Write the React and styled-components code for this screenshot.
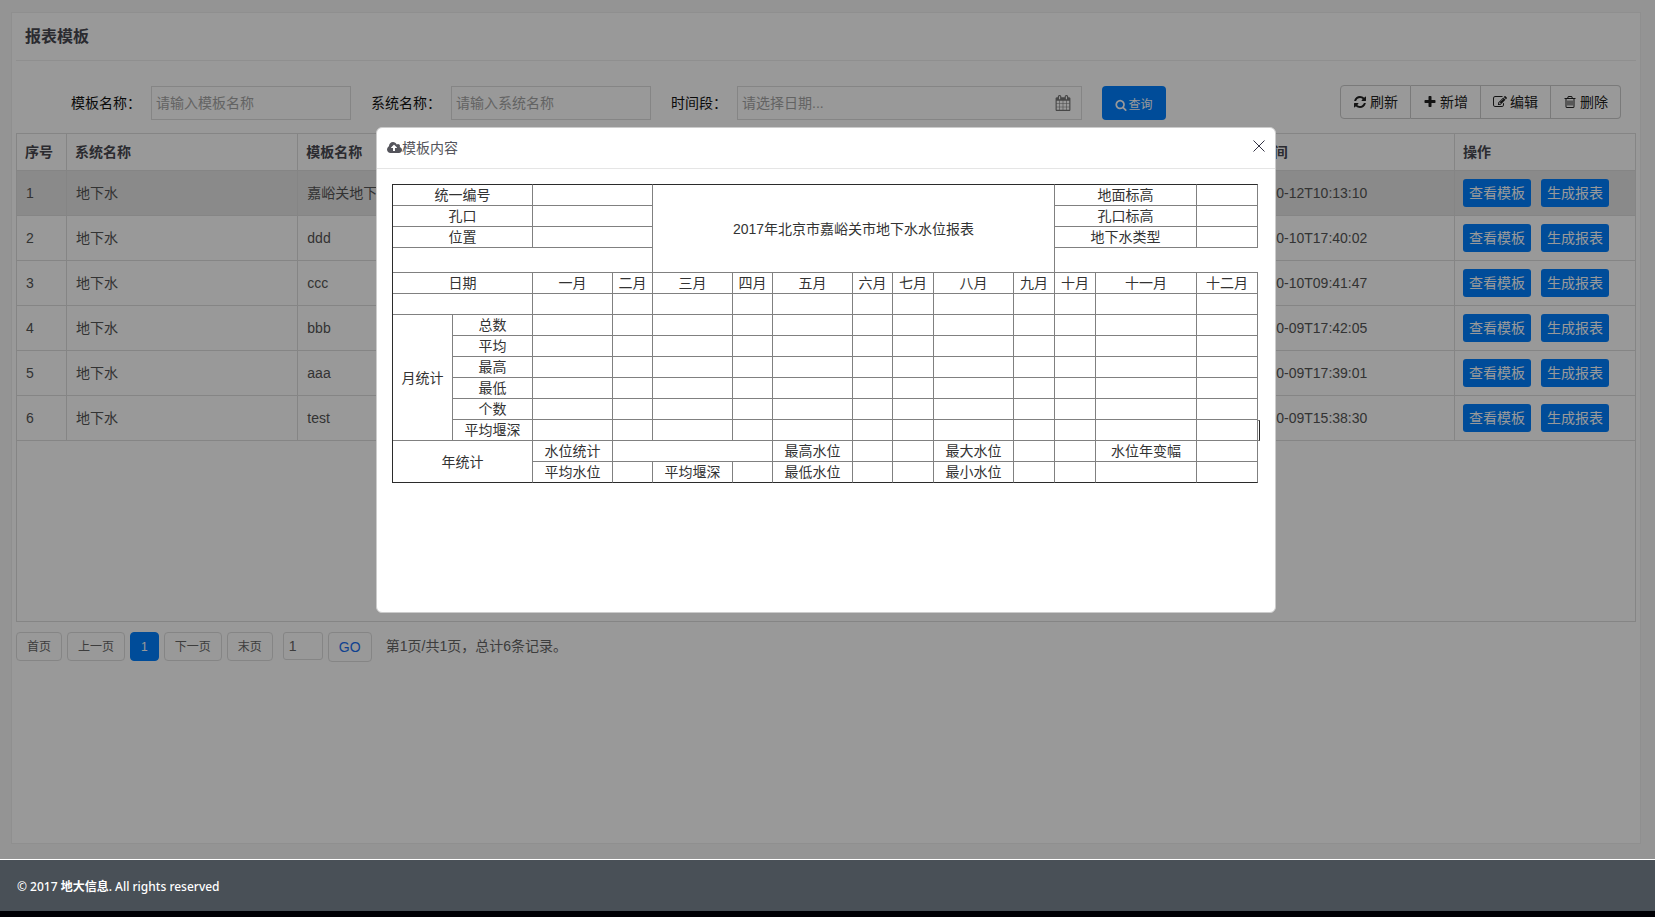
import React from "react";
import styled, { createGlobalStyle } from "styled-components";

const BLUE = "#007fff";
const LINE = "#dedede";

const GlobalStyle = createGlobalStyle`
  *, *::before, *::after { box-sizing: border-box; }
  body {
    margin: 0;
    background: #f7f7f7;
    color: #333;
    font: 14px/20px "Liberation Sans", "Noto Sans CJK SC", sans-serif;
  }
  button, input { font: inherit; color: inherit; margin: 0; }
  button { cursor: pointer; padding: 0; }
`;

/* ---------- icons ---------- */

const ICONS = {
  search: [1792, "M1216 832q0-185-131.5-316.5t-316.5-131.5-316.5 131.5-131.5 316.5 131.5 316.5 316.5 131.5 316.5-131.5 131.5-316.5zm512 832q0 52-38 90t-90 38q-54 0-90-38l-343-342q-179 124-399 124-143 0-273.5-55.5t-225-150-150-225-55.5-273.5 55.5-273.5 150-225 225-150 273.5-55.5 273.5 55.5 225 150 150 225 55.5 273.5q0 220-124 399l343 343q37 37 37 90z"],
  refresh: [1792, "M1639 1056q0 5-1 7-64 268-268 434.5t-478 166.5q-146 0-282.5-55t-243.5-157l-129 129q-19 19-45 19t-45-19-19-45v-448q0-26 19-45t45-19h448q26 0 45 19t19 45-19 45l-137 137q71 66 161 102t187 36q134 0 250-65t186-179q11-17 53-117 8-23 30-23h192q13 0 22.5 9.5t9.5 22.5zm25-800v448q0 26-19 45t-45 19h-448q-26 0-45-19t-19-45 19-45l138-138q-148-137-349-137-134 0-250 65t-186 179q-11 17-53 117-8 23-30 23h-199q-13 0-22.5-9.5t-9.5-22.5v-7q65-268 270-434.5t480-166.5q146 0 284 55.5t245 156.5l130-129q19-19 45-19t45 19 19 45z"],
  plus: [1792, "M1600 736v192q0 40-28 68t-68 28h-416v416q0 40-28 68t-68 28h-192q-40 0-68-28t-28-68v-416h-416q-40 0-68-28t-28-68v-192q0-40 28-68t68-28h416v-416q0-40 28-68t68-28h192q40 0 68 28t28 68v416h416q40 0 68 28t28 68z"],
  edit: [1792, "M888 1184l116-116-152-152-116 116v56h96v96h56zm440-720q-16-16-33 1l-350 350q-17 17-1 33t33-1l350-350q17-17 1-33zm80 594v190q0 119-84.5 203.5t-203.5 84.5h-832q-119 0-203.5-84.5t-84.5-203.5v-832q0-119 84.5-203.5t203.5-84.5h832q63 0 117 25 15 7 18 23 3 17-9 29l-49 49q-14 14-32 8-23-6-45-6h-832q-66 0-113 47t-47 113v832q0 66 47 113t113 47h832q66 0 113-47t47-113v-126q0-13 9-22l64-64q15-15 35-7t20 29zm-96-738l288 288-672 672h-288v-288zm444 132l-92 92-288-288 92-92q28-28 68-28t68 28l152 152q28 28 28 68t-28 68z"],
  trash: [1792, "M704 736v576q0 14-9 23t-23 9h-64q-14 0-23-9t-9-23v-576q0-14 9-23t23-9h64q14 0 23 9t9 23zm256 0v576q0 14-9 23t-23 9h-64q-14 0-23-9t-9-23v-576q0-14 9-23t23-9h64q14 0 23 9t9 23zm256 0v576q0 14-9 23t-23 9h-64q-14 0-23-9t-9-23v-576q0-14 9-23t23-9h64q14 0 23 9t9 23zm128 724v-948h-896v948q0 22 7 40.5t14.5 27 10.5 8.5h832q3 0 10.5-8.5t14.5-27 7-40.5zm-672-1076h448l-48-117q-7-9-17-11h-317q-10 2-17 11zm928 32v64q0 14-9 23t-23 9h-96v948q0 83-47 143.5t-113 60.5h-832q-66 0-113-58.5t-47-141.5v-952h-96q-14 0-23-9t-9-23v-64q0-14 9-23t23-9h309l70-167q15-37 54-63t79-26h320q40 0 79 26t54 63l70 167h309q14 0 23 9t9 23z"],
  calendar: [1792, "M192 1664h288v-288h-288v288zm352 0h320v-288h-320v288zm-352-352h288v-320h-288v320zm352 0h320v-320h-320v320zm-352-384h288v-288h-288v288zm736 736h320v-288h-320v288zm-384-736h320v-288h-320v288zm768 736h288v-288h-288v288zm-384-352h320v-320h-320v320zm-352-864v-288q0-13-9.5-22.5t-22.5-9.5h-64q-13 0-22.5 9.5t-9.5 22.5v288q0 13 9.5 22.5t22.5 9.5h64q13 0 22.5-9.5t9.5-22.5zm736 864h288v-320h-288v320zm-384-384h320v-288h-320v288zm384 0h288v-288h-288v288zm32-480v-288q0-13-9.5-22.5t-22.5-9.5h-64q-13 0-22.5 9.5t-9.5 22.5v288q0 13 9.5 22.5t22.5 9.5h64q13 0 22.5-9.5t9.5-22.5zm384-64v1280q0 52-38 90t-90 38h-1408q-52 0-90-38t-38-90v-1280q0-52 38-90t90-38h128v-96q0-66 47-113t113-47h64q66 0 113 47t47 113v96h384v-96q0-66 47-113t113-47h64q66 0 113 47t47 113v96h128q52 0 90 38t38 90z"],
  upload: [1920, "M1280 864q0-14-9-23l-352-352q-9-9-23-9t-23 9l-351 351q-10 12-10 24 0 14 9 23t23 9h224v352q0 13 9.5 22.5t22.5 9.5h192q13 0 22.5-9.5t9.5-22.5v-352h224q13 0 22.5-9.5t9.5-22.5zm640 288q0 159-112.5 271.5t-271.5 112.5h-1088q-185 0-316.5-131.5t-131.5-316.5q0-130 70-240t188-165q-2-30-2-43 0-212 150-362t362-150q156 0 285.5 87t188.5 231q71-62 166-62 106 0 181 75t75 181q0 76-41 138 130 31 213.5 135.5t83.5 238.5z"],
};

const IconSvg = styled.svg`
  height: ${(p) => p.$size}px;
  flex: none;
  fill: currentColor;
`;

const Icon = ({ name, size = 14 }) => (
  <IconSvg $size={size} viewBox={`0 0 ${ICONS[name][0]} 1792`} aria-hidden="true">
    <path d={ICONS[name][1]} />
  </IconSvg>
);

/* ---------- page frame ---------- */

const Page = styled.div`
  min-height: 100vh;
  display: flex;
  flex-direction: column;
`;

const Main = styled.main`
  flex: 1;
  display: flex;
  padding: 12px 14px 15px 11px;
`;

const Panel = styled.section`
  flex: 1;
  min-width: 0;
  padding: 0 4px;
  background: #fff;
  border: 1px solid #eee;
`;

const PanelTitle = styled.h1`
  margin: 0;
  padding: 12px 9px 11px;
  border-bottom: 1px solid #eee;
  font-size: 16px;
  line-height: 24px;
  font-weight: 700;
  color: #484850;
`;

const Footer = styled.footer`
  position: relative;
  z-index: 2;
  padding: 17px 17px 15px;
  border-top: 1px solid #fff;
  border-bottom: 6px solid #000005;
  background: #495057;
  color: #fff;
  font: 500 12px/19px "Noto Sans", "Noto Sans CJK SC", sans-serif;
`;

/* ---------- search bar ---------- */

const Toolbar = styled.div`
  display: flex;
  justify-content: space-between;
  padding: 24px 15px 13px 55px;
`;

const SearchForm = styled.form`
  display: flex;
  gap: 20px;
  padding-top: 1px;
`;

const Field = styled.div`
  display: flex;
  align-items: center;
  gap: 10px;
  color: #111;
`;

const InputBox = styled.div`
  display: flex;
  align-items: center;
  width: ${(p) => p.$width}px;
  height: 34px;
  padding-right: 10px;
  border: 1px solid ${LINE};
  color: #777;
`;

const TextInput = styled.input`
  flex: 1;
  min-width: 0;
  height: 32px;
  padding: 0 4px;
  border: 0;
  outline: 0;
  background: none;
  &::placeholder { color: #a6a6a6; opacity: 1; }
`;

const SearchButton = styled.button`
  display: flex;
  align-items: center;
  justify-content: center;
  gap: 1px;
  width: 64px;
  height: 34px;
  padding-top: 4px;
  border: 0;
  border-radius: 4px;
  background: ${BLUE};
  color: #fff;
  font-size: 12px;
`;

const ButtonGroup = styled.div`
  display: flex;
`;

const GroupButton = styled.button`
  display: flex;
  align-items: center;
  justify-content: center;
  gap: 3px;
  height: 34px;
  padding: 0 12px;
  border: 1px solid #ccc;
  border-left-width: ${(p) => (p.$first ? 1 : 0)}px;
  border-radius: ${(p) => (p.$first ? "4px 0 0 4px" : p.$last ? "0 4px 4px 0" : 0)};
  background: #fff;
  color: #222;
`;

/* ---------- list ---------- */

const ListBox = styled.div`
  min-height: 489px;
  border: 1px solid ${LINE};
`;

const List = styled.table`
  width: 100%;
  table-layout: fixed;
  border-collapse: separate;
  border-spacing: 0;
`;

const HeadCell = styled.th`
  width: ${(p) => (p.$width ? `${p.$width}px` : "auto")};
  height: 37px;
  padding: 0 8px;
  border-bottom: 1px solid ${LINE};
  text-align: left;
  font-weight: 700;
  color: #484850;
  & + & { border-left: 1px solid ${LINE}; }
`;

const Row = styled.tr`
  background: ${(p) => (p.$selected ? "#e6e6e6" : "#fff")};
`;

const Cell = styled.td`
  height: 45px;
  padding: 0 ${(p) => (p.$actions ? 8 : 9)}px;
  border-bottom: 1px solid ${LINE};
  color: #555;
  & + & { border-left: 1px solid ${LINE}; }
`;

const Actions = styled.div`
  display: flex;
  gap: 10px;
`;

const ActionButton = styled.button`
  width: 68px;
  height: 28px;
  border: 0;
  border-radius: 3px;
  background: ${BLUE};
  color: #fff;
`;

/* ---------- pager ---------- */

const Pager = styled.form`
  display: flex;
  align-items: flex-start;
  gap: 5px;
  padding-top: 10px;
  color: #666;
`;

const PageButton = styled.button`
  height: 29px;
  padding: 0 10px;
  border: 1px solid ${(p) => (p.$active ? BLUE : LINE)};
  border-radius: 4px;
  background: ${(p) => (p.$active ? BLUE : "#fff")};
  color: ${(p) => (p.$active ? "#fff" : "#666")};
  font-size: 12px;
`;

const PageInput = styled.input`
  width: 40px;
  height: 28px;
  margin-left: 5px;
  padding: 0 5px;
  border: 1px solid ${LINE};
  border-radius: 3px;
  background: #fff;
`;

const GoButton = styled.button`
  width: 44px;
  height: 30px;
  border: 1px solid ${LINE};
  border-radius: 4px;
  background: #fff;
  color: #1a6ef0;
`;

const PageInfo = styled.span`
  padding-left: 9px;
  line-height: 28px;
`;

/* ---------- dialog ---------- */

const Overlay = styled.div`
  position: fixed;
  inset: 0;
  z-index: 1;
  display: flex;
  align-items: flex-start;
  justify-content: center;
  padding: 127px 3px 0 0;
  background: rgba(0, 0, 0, 0.4);
`;

const Dialog = styled.div`
  width: 900px;
  max-width: 100%;
  min-height: 486px;
  background: #fff;
  border: 1px solid #ccc;
  border-radius: 6px;
`;

const DialogHeader = styled.header`
  display: flex;
  align-items: center;
  justify-content: space-between;
  height: 41px;
  padding: 0 10px;
  border-bottom: 1px solid #e5e5e5;
`;

const DialogTitle = styled.h2`
  display: flex;
  align-items: center;
  margin: 0;
  font-size: 14px;
  font-weight: 400;
  color: #55555c;
`;

const CloseButton = styled.button`
  display: flex;
  padding: 0 0 4px;
  border: 0;
  background: none;
  color: #334;
  svg { width: 12px; height: 12px; stroke: currentColor; }
`;

const DialogBody = styled.div`
  padding: 15px;
`;

const Report = styled.table`
  table-layout: fixed;
  width: 868px;
  border-collapse: separate;
  border-spacing: 0;
  border-left: 1px solid #2b2b2b;
  line-height: 18px;
  text-align: center;
`;

const ReportRow = styled.tr`
  height: ${(p) => p.$height || 21}px;
`;

const ReportCell = styled.td`
  padding: 0;
  border: 0 solid #808080;
  border-right-width: ${(p) => (p.$open ? 0 : 1)}px;
  border-bottom-width: 1px;
  ${(p) => p.$top && "border-top: 1px solid #2b2b2b;"}
  ${(p) => p.$bottom && "border-bottom-color: #2b2b2b;"}
`;

const StrayCell = styled(ReportCell)`
  border-top-width: 1px;
  border-right-color: #2b2b2b;
`;

/* ---------- data ---------- */

const ROWS = [
  ["嘉峪关地下水", "2017-10-12T10:13:10"],
  ["ddd", "2017-10-10T17:40:02"],
  ["ccc", "2017-10-10T09:41:47"],
  ["bbb", "2017-10-09T17:42:05"],
  ["aaa", "2017-10-09T17:39:01"],
  ["test", "2017-10-09T15:38:30"],
];

const TOOLS = [
  ["refresh", "刷新"],
  ["plus", "新增"],
  ["edit", "编辑"],
  ["trash", "删除"],
];

const REPORT_COLUMNS = [60, 80, 80, 40, 80, 40, 80, 40, 41, 80, 41, 41, 101, 61, 2];
const MONTHS = ["一月", "二月", "三月", "四月", "五月", "六月", "七月", "八月", "九月", "十月", "十一月", "十二月"];
const MONTH_STATS = ["总数", "平均", "最高", "最低", "个数", "平均堰深"];
const YEAR_TOP = ["最高水位", "", "", "最大水位", "", "", "水位年变幅", ""];
const YEAR_BOTTOM = ["平均水位", "", "平均堰深", "", "最低水位", "", "", "最小水位", "", "", "", ""];

const ReportTable = () => (
  <Report>
    <colgroup>
      {REPORT_COLUMNS.map((width, i) => (
        <col key={i} width={width} />
      ))}
    </colgroup>
    <tbody>
      <ReportRow $height={22}>
        <ReportCell $top colSpan={2}>统一编号</ReportCell>
        <ReportCell $top colSpan={2} />
        <ReportCell $top colSpan={7} rowSpan={4}>2017年北京市嘉峪关市地下水水位报表</ReportCell>
        <ReportCell $top colSpan={2}>地面标高</ReportCell>
        <ReportCell $top />
      </ReportRow>
      {[["孔口", "孔口标高"], ["位置", "地下水类型"]].map(([left, right]) => (
        <ReportRow key={left}>
          <ReportCell colSpan={2}>{left}</ReportCell>
          <ReportCell colSpan={2} />
          <ReportCell colSpan={2}>{right}</ReportCell>
          <ReportCell />
        </ReportRow>
      ))}
      <ReportRow $height={25}>
        <ReportCell colSpan={4} />
        <ReportCell $open colSpan={3} />
      </ReportRow>
      <ReportRow>
        <ReportCell colSpan={2}>日期</ReportCell>
        {MONTHS.map((m) => <ReportCell key={m}>{m}</ReportCell>)}
      </ReportRow>
      <ReportRow>
        <ReportCell colSpan={2} />
        {MONTHS.map((m) => <ReportCell key={m} />)}
      </ReportRow>
      {MONTH_STATS.map((stat, i) => (
        <ReportRow key={stat}>
          {i === 0 && <ReportCell rowSpan={6}>月统计</ReportCell>}
          <ReportCell>{stat}</ReportCell>
          {MONTHS.map((m) => <ReportCell key={m} />)}
          {i === 5 && <StrayCell />}
        </ReportRow>
      ))}
      <ReportRow>
        <ReportCell $bottom colSpan={2} rowSpan={2}>年统计</ReportCell>
        <ReportCell>水位统计</ReportCell>
        <ReportCell colSpan={3} />
        {YEAR_TOP.map((text, i) => <ReportCell key={i}>{text}</ReportCell>)}
      </ReportRow>
      <ReportRow>
        {YEAR_BOTTOM.map((text, i) => <ReportCell $bottom key={i}>{text}</ReportCell>)}
      </ReportRow>
    </tbody>
  </Report>
);

const stop = (e) => e.preventDefault();

export default function App() {
  return (
    <Page>
      <GlobalStyle />
      <Main>
        <Panel>
          <PanelTitle>报表模板</PanelTitle>
          <Toolbar>
            <SearchForm onSubmit={stop}>
              <Field>
                <label htmlFor="template">模板名称：</label>
                <InputBox $width={200}>
                  <TextInput id="template" placeholder="请输入模板名称" />
                </InputBox>
              </Field>
              <Field>
                <label htmlFor="system">系统名称：</label>
                <InputBox $width={200}>
                  <TextInput id="system" placeholder="请输入系统名称" />
                </InputBox>
              </Field>
              <Field>
                <label htmlFor="period">时间段：</label>
                <InputBox $width={345}>
                  <TextInput id="period" placeholder="请选择日期..." />
                  <Icon name="calendar" size={16} />
                </InputBox>
              </Field>
              <SearchButton type="submit">
                <Icon name="search" size={12} />
                查询
              </SearchButton>
            </SearchForm>
            <ButtonGroup>
              {TOOLS.map(([icon, text], i) => (
                <GroupButton key={icon} type="button" $first={i === 0} $last={i === TOOLS.length - 1}>
                  <Icon name={icon} />
                  {text}
                </GroupButton>
              ))}
            </ButtonGroup>
          </Toolbar>
          <ListBox>
            <List>
              <thead>
                <tr>
                  <HeadCell $width={49}>序号</HeadCell>
                  <HeadCell>系统名称</HeadCell>
                  <HeadCell>模板名称</HeadCell>
                  <HeadCell />
                  <HeadCell />
                  <HeadCell />
                  <HeadCell>创建时间</HeadCell>
                  <HeadCell $width={181}>操作</HeadCell>
                </tr>
              </thead>
              <tbody>
                {ROWS.map(([name, time], i) => (
                  <Row key={name} $selected={i === 0}>
                    <Cell>{i + 1}</Cell>
                    <Cell>地下水</Cell>
                    <Cell>{name}</Cell>
                    <Cell />
                    <Cell />
                    <Cell />
                    <Cell>{time}</Cell>
                    <Cell $actions>
                      <Actions>
                        <ActionButton type="button">查看模板</ActionButton>
                        <ActionButton type="button">生成报表</ActionButton>
                      </Actions>
                    </Cell>
                  </Row>
                ))}
              </tbody>
            </List>
          </ListBox>
          <Pager onSubmit={stop}>
            <PageButton type="button">首页</PageButton>
            <PageButton type="button">上一页</PageButton>
            <PageButton type="button" $active>1</PageButton>
            <PageButton type="button">下一页</PageButton>
            <PageButton type="button">末页</PageButton>
            <PageInput aria-label="页码" defaultValue="1" />
            <GoButton type="submit">GO</GoButton>
            <PageInfo>第1页/共1页，总计6条记录。</PageInfo>
          </Pager>
        </Panel>
      </Main>
      <Footer>
        © 2017 <strong>地大信息</strong>. All rights reserved
      </Footer>
      <Overlay>
        <Dialog role="dialog" aria-labelledby="dialog-title">
          <DialogHeader>
            <DialogTitle id="dialog-title">
              <Icon name="upload" />
              模板内容
            </DialogTitle>
            <CloseButton type="button" aria-label="关闭">
              <svg viewBox="0 0 12 12"><path d="M0.5 0.5L11.5 11.5M11.5 0.5L0.5 11.5" /></svg>
            </CloseButton>
          </DialogHeader>
          <DialogBody>
            <ReportTable />
          </DialogBody>
        </Dialog>
      </Overlay>
    </Page>
  );
}
